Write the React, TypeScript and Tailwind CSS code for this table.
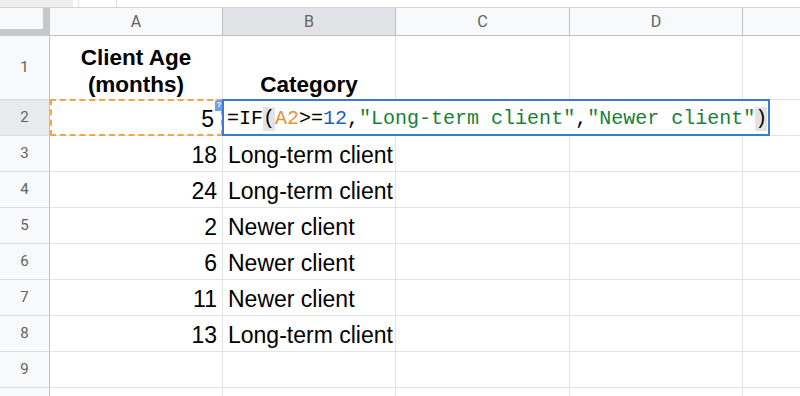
import React from 'react';

type Row = { n: number; a?: string; b?: string };

const dataRows: Row[] = [
  { n: 3, a: '18', b: 'Long-term client' },
  { n: 4, a: '24', b: 'Long-term client' },
  { n: 5, a: '2', b: 'Newer client' },
  { n: 6, a: '6', b: 'Newer client' },
  { n: 7, a: '11', b: 'Newer client' },
  { n: 8, a: '13', b: 'Long-term client' },
  { n: 9 },
];

const RowHead: React.FC<{ n?: number; selected?: boolean }> = ({ n, selected }) => (
  <div
    className={`w-[50px] shrink-0 flex items-center justify-center border-r border-b border-r-[#c0c0c0] border-b-[#dadce0] font-['Roboto',sans-serif] text-[15px] font-normal text-[#5f6368] ${
      selected ? 'bg-[#e8eaed]' : 'bg-[#f8f9fa]'
    }`}
  >
    {n}
  </div>
);

const EmptyCells = () => (
  <>
    <div className="w-[174px] shrink-0 border-r border-b border-[#e2e3e3]" />
    <div className="w-[173px] shrink-0 border-r border-b border-[#e2e3e3]" />
    <div className="flex-1 border-b border-[#e2e3e3]" />
  </>
);

const Formula = () => (
  <div className="absolute left-[-1px] top-[-1px] z-10 w-[548px] h-[37px] bg-white border-2 border-[#3c78d8] flex items-end pl-[3px] pb-[3px] whitespace-nowrap font-['Liberation_Mono',monospace] text-[20px] leading-[24px] text-black">
    <span>=IF</span>
    <span className="bg-[#e3e3e3]">(</span>
    <span className="text-[#e69138]">A2</span>
    <span>&gt;=</span>
    <span className="text-[#1c5fc4]">12</span>
    <span>,</span>
    <span className="text-[#188038]">"Long-term client"</span>
    <span>,</span>
    <span className="text-[#188038]">"Newer client"</span>
    <span className="bg-[#e3e3e3]">)</span>
    <span className="ml-[1px] w-[1px] h-[24px] bg-black" />
  </div>
);

export default function App() {
  return (
    <div className="w-[800px] h-[396px] overflow-hidden bg-white font-['Liberation_Sans',Arial,sans-serif] text-black">
      {/* bottom edge of the formula bar */}
      <div className="flex h-[7px]">
        <div className="w-[73px] bg-[#eeeeee]" />
        <div className="w-[5px]" />
        <div className="w-[38px] border-l border-[#e0e0e0]" />
        <div className="flex-1 border-l border-[#e0e0e0]" />
      </div>

      {/* column headers */}
      <div className="flex h-[29px] border-t border-[#d4d4d4] font-['Roboto',sans-serif] text-[16px] text-[#5f6368]">
        <div className="w-[50px] shrink-0 bg-[#f8f9fa] border-r-[7px] border-b-[7px] border-[#c6c8ca]" />
        <div className="w-[173px] shrink-0 flex items-center justify-center bg-[#f8f9fa] border-r border-b border-[#c0c0c0]">A</div>
        <div className="w-[173px] shrink-0 flex items-center justify-center bg-[#e1e3e6] border-r border-b border-[#c0c0c0]">B</div>
        <div className="w-[174px] shrink-0 flex items-center justify-center bg-[#f8f9fa] border-r border-b border-[#c0c0c0]">C</div>
        <div className="w-[173px] shrink-0 flex items-center justify-center bg-[#f8f9fa] border-r border-b border-[#c0c0c0]">D</div>
        <div className="flex-1 bg-[#f8f9fa] border-b border-[#c0c0c0]" />
      </div>

      {/* row 1: headers of the table */}
      <div className="flex h-[64px] text-[22.5px] font-bold">
        <RowHead n={1} />
        <div className="w-[173px] shrink-0 flex items-end justify-center text-center leading-[27px] pb-[1px] border-r border-b border-[#e2e3e3]">
          Client Age
          <br />
          (months)
        </div>
        <div className="w-[173px] shrink-0 flex items-end justify-center leading-[27px] pb-[1px] border-r border-b border-[#e2e3e3]">
          Category
        </div>
        <EmptyCells />
      </div>

      {/* row 2: editing B2 */}
      <div className="flex h-[36px] text-[23px] leading-[25px]">
        <RowHead n={2} selected />
        <div className="relative w-[173px] shrink-0 flex items-end justify-end pr-[8px] pb-[3px] border-r border-b border-[#e2e3e3]">
          5
          <div className="absolute top-[-1px] left-0 right-[-1px] bottom-[-1px] border-2 border-dashed border-[#f0a54a]" />
          <div className="absolute top-0 right-[-1px] w-[8px] h-[11px] bg-[#6d9eeb] rounded-tl-[2px] flex items-start justify-center text-[8px] leading-[10px] font-bold text-white">
            ?
          </div>
        </div>
        <div className="relative w-[173px] shrink-0 border-r border-b border-[#e2e3e3]">
          <Formula />
        </div>
        <EmptyCells />
      </div>

      {dataRows.map((r) => (
        <div key={r.n} className="flex h-[36px] text-[23px] leading-[25px]">
          <RowHead n={r.n} />
          <div className="w-[173px] shrink-0 flex items-end justify-end px-[5px] pb-[3px] border-r border-b border-[#e2e3e3]">
            {r.a}
          </div>
          <div className="w-[173px] shrink-0 flex items-end px-[5px] pb-[3px] whitespace-nowrap border-r border-b border-[#e2e3e3]">
            {r.b}
          </div>
          <EmptyCells />
        </div>
      ))}

      {/* row 10, only its top edge is in view */}
      <div className="flex h-[36px]">
        <RowHead />
        <div className="w-[173px] shrink-0 border-r border-b border-[#e2e3e3]" />
        <div className="w-[173px] shrink-0 border-r border-b border-[#e2e3e3]" />
        <EmptyCells />
      </div>
    </div>
  );
}
